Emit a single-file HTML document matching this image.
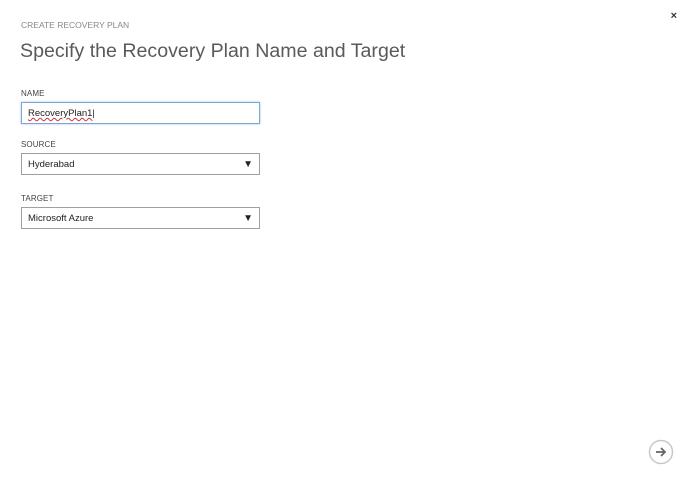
<!DOCTYPE html>
<html><head><style>
body{margin:0;width:687px;height:478px;background:#fff;font-family:"Liberation Sans",sans-serif;position:relative;overflow:hidden}
.a{position:absolute}
.lbl{font-size:8px;color:#444;letter-spacing:.1px}
.box{position:absolute;left:21px;height:20px;border:1px solid #a0a0a0;font-size:9.5px;color:#222;line-height:22px;padding-left:6px;box-sizing:content-box;width:231px}
.arr{position:absolute;right:6px;top:0;font-size:10px}
</style></head><body>
<div class="a" style="left:21px;top:20px;font-size:8.5px;color:#888">CREATE RECOVERY PLAN</div>
<div class="a" style="left:20px;top:40px;font-size:19.6px;color:#5a5a5a">Specify the Recovery Plan Name and Target</div>
<div class="a" style="right:10px;top:10px;font-size:11px;color:#333;font-weight:bold">×</div>
<div class="a lbl" style="left:21px;top:89px">NAME</div>
<div class="box" style="top:102px;border-color:#7aa7d6;box-shadow:0 0 2px #9cc0e6"><span style="text-decoration:underline wavy #c33;text-decoration-thickness:1px">RecoveryPlan1</span>|</div>
<div class="a lbl" style="left:21px;top:140px">SOURCE</div>
<div class="box" style="top:153px">Hyderabad<span class="arr">▼</span></div>
<div class="a lbl" style="left:21px;top:194px">TARGET</div>
<div class="box" style="top:207px">Microsoft Azure<span class="arr">▼</span></div>
<svg class="a" style="left:647px;top:438px" width="28" height="28"><circle cx="14" cy="14" r="11.5" fill="none" stroke="#c8c8c8" stroke-width="1.5"/><path d="M9 14h9M14 10l4 4-4 4" fill="none" stroke="#666" stroke-width="1.8"/></svg>
</body></html>
